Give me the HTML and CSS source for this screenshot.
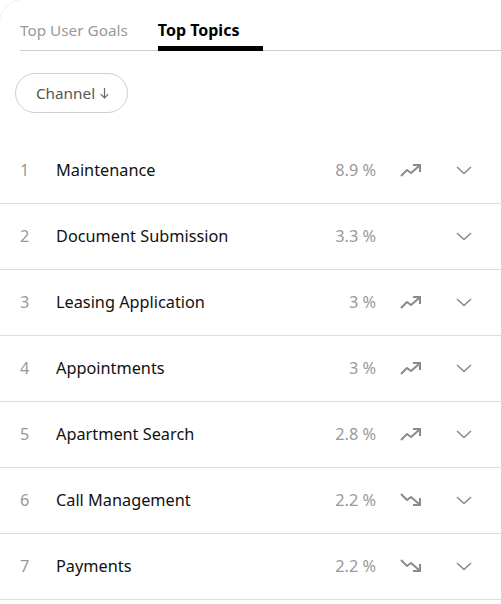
FILE: index.html
```html
<!DOCTYPE html>
<html>
<head>
<meta charset="utf-8">
<link rel="stylesheet" href="styles.css">
</head>
<body>
<div class="card">
  <div class="tabs">
    <div class="tab">Top User Goals</div>
    <div class="tab active">Top Topics</div>
  </div>
  <div class="filters">
    <button class="pill">Channel <svg class="arrow" width="9" height="11" viewBox="0 0 9 11"><line x1="4.5" y1="0" x2="4.5" y2="10" stroke="#666" stroke-width="1.2"/><polyline points="0.8,6.2 4.5,10 8.2,6.2" fill="none" stroke="#666" stroke-width="1.2"/></svg></button>
  </div>
  <div class="list">
    <div class="row"><span class="num">1</span><span class="name">Maintenance</span><span class="pct">8.9 %</span><span class="trend"><svg width="22" height="14" viewBox="0 0 22 14"><polyline points="1,13 7,7 11,10 19,3" fill="none" stroke="#8a8a8a" stroke-width="2" stroke-linejoin="round"/><polyline points="13,2 20,2 20,9" fill="none" stroke="#8a8a8a" stroke-width="2"/></svg></span><span class="chev"><svg width="16" height="9" viewBox="0 0 16 9"><polyline points="1,1 8,7.5 15,1" fill="none" stroke="#8a8a8a" stroke-width="1.6"/></svg></span></div>
    <div class="row"><span class="num">2</span><span class="name">Document Submission</span><span class="pct">3.3 %</span><span class="trend"></span><span class="chev"><svg width="16" height="9" viewBox="0 0 16 9"><polyline points="1,1 8,7.5 15,1" fill="none" stroke="#8a8a8a" stroke-width="1.6"/></svg></span></div>
    <div class="row"><span class="num">3</span><span class="name">Leasing Application</span><span class="pct">3 %</span><span class="trend"><svg width="22" height="14" viewBox="0 0 22 14"><polyline points="1,13 7,7 11,10 19,3" fill="none" stroke="#8a8a8a" stroke-width="2" stroke-linejoin="round"/><polyline points="13,2 20,2 20,9" fill="none" stroke="#8a8a8a" stroke-width="2"/></svg></span><span class="chev"><svg width="16" height="9" viewBox="0 0 16 9"><polyline points="1,1 8,7.5 15,1" fill="none" stroke="#8a8a8a" stroke-width="1.6"/></svg></span></div>
    <div class="row"><span class="num">4</span><span class="name">Appointments</span><span class="pct">3 %</span><span class="trend"><svg width="22" height="14" viewBox="0 0 22 14"><polyline points="1,13 7,7 11,10 19,3" fill="none" stroke="#8a8a8a" stroke-width="2" stroke-linejoin="round"/><polyline points="13,2 20,2 20,9" fill="none" stroke="#8a8a8a" stroke-width="2"/></svg></span><span class="chev"><svg width="16" height="9" viewBox="0 0 16 9"><polyline points="1,1 8,7.5 15,1" fill="none" stroke="#8a8a8a" stroke-width="1.6"/></svg></span></div>
    <div class="row"><span class="num">5</span><span class="name">Apartment Search</span><span class="pct">2.8 %</span><span class="trend"><svg width="22" height="14" viewBox="0 0 22 14"><polyline points="1,13 7,7 11,10 19,3" fill="none" stroke="#8a8a8a" stroke-width="2" stroke-linejoin="round"/><polyline points="13,2 20,2 20,9" fill="none" stroke="#8a8a8a" stroke-width="2"/></svg></span><span class="chev"><svg width="16" height="9" viewBox="0 0 16 9"><polyline points="1,1 8,7.5 15,1" fill="none" stroke="#8a8a8a" stroke-width="1.6"/></svg></span></div>
    <div class="row"><span class="num">6</span><span class="name">Call Management</span><span class="pct">2.2 %</span><span class="trend"><svg width="22" height="14" viewBox="0 0 22 14"><polyline points="1,1 7,7 11,4 19,11" fill="none" stroke="#8a8a8a" stroke-width="2" stroke-linejoin="round"/><polyline points="13,12 20,12 20,5" fill="none" stroke="#8a8a8a" stroke-width="2"/></svg></span><span class="chev"><svg width="16" height="9" viewBox="0 0 16 9"><polyline points="1,1 8,7.5 15,1" fill="none" stroke="#8a8a8a" stroke-width="1.6"/></svg></span></div>
    <div class="row"><span class="num">7</span><span class="name">Payments</span><span class="pct">2.2 %</span><span class="trend"><svg width="22" height="14" viewBox="0 0 22 14"><polyline points="1,1 7,7 11,4 19,11" fill="none" stroke="#8a8a8a" stroke-width="2" stroke-linejoin="round"/><polyline points="13,12 20,12 20,5" fill="none" stroke="#8a8a8a" stroke-width="2"/></svg></span><span class="chev"><svg width="16" height="9" viewBox="0 0 16 9"><polyline points="1,1 8,7.5 15,1" fill="none" stroke="#8a8a8a" stroke-width="1.6"/></svg></span></div>
  </div>
</div>
</body>
</html>
```

FILE: styles.css
```css
html, body {
  margin: 0;
  padding: 0;
  background: #fff;
}
body {
  font-family: "Noto Sans", "Open Sans", sans-serif;
  color: #111;
}
.card {
  min-height: 604px;
  box-sizing: border-box;
  border-top: 1px solid #f2f2f2;
  border-left: 1px solid #f2f2f2;
  border-top-left-radius: 24px;
  margin: -1px 0 0 -1px;
}
.tabs {
  display: flex;
  margin: 0 0 0 20px;
  padding-top: 19px;
  border-bottom: 1px solid #cfcfcf;
}
.tab {
  font-size: 15.3px;
  line-height: 22px;
  color: #999;
  padding-bottom: 9px;
  margin-right: 30px;
}
.tab.active {
  font-size: 16px;
  color: #000;
  font-weight: 700;
  padding-right: 24px;
  margin-right: 0;
  border-bottom: 5px solid #000;
  padding-bottom: 4px;
  margin-bottom: -1px;
}
.filters {
  padding: 22px 0 0 15px;
}
.pill {
  height: 40px;
  width: 113px;
  border: 1px solid #cfcfcf;
  border-radius: 20px;
  background: #fff;
  font-family: inherit;
  font-size: 15.3px;
  color: #555;
  padding: 0 0 0 2px;
  cursor: pointer;
  display: flex;
  align-items: center;
  justify-content: center;
  gap: 5px;
}
.arrow {
  margin-top: 1px;
}
.list {
  margin-top: 25px;
}
.row {
  display: flex;
  align-items: center;
  height: 66px;
  box-sizing: border-box;
  border-bottom: 1px solid #dcdcdc;
  padding-bottom: 1px;
}
.num {
  width: 36px;
  padding-left: 20px;
  font-size: 16.3px;
  color: #999;
}
.name {
  flex: 1;
  font-size: 16.3px;
  color: #111;
}
.pct {
  width: 80px;
  text-align: right;
  font-size: 16.3px;
  color: #999;
}
.trend {
  width: 22px;
  margin-left: 24px;
  display: flex;
  align-items: center;
}
.chev {
  width: 16px;
  margin-left: 34px;
  margin-right: 29px;
  display: flex;
  align-items: center;
}
```
